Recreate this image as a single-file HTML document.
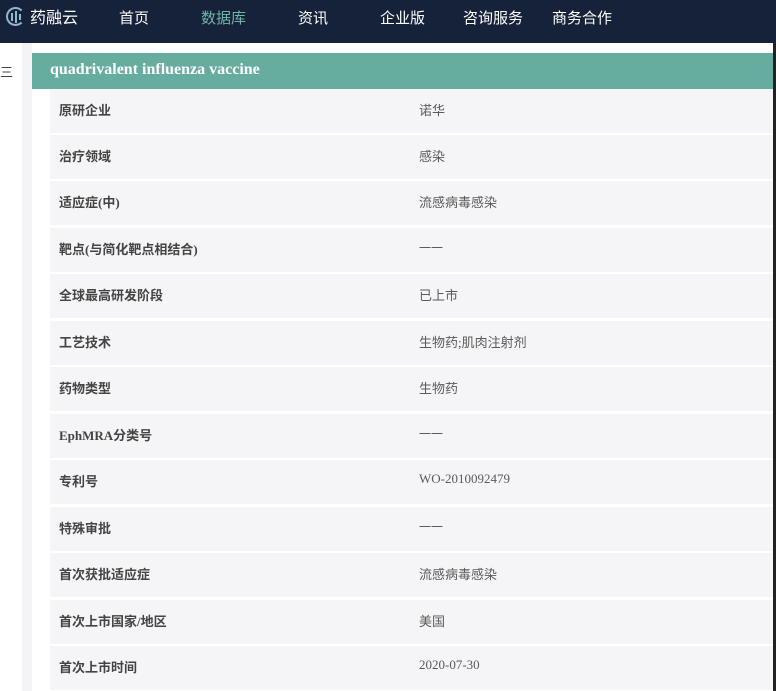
<!DOCTYPE html>
<html><head><meta charset="utf-8"><style>
*{margin:0;padding:0;box-sizing:border-box}
body{width:776px;height:691px;overflow:hidden;background:#fff;position:relative;font-family:"Liberation Serif","Noto Sans CJK SC",serif}
.nav{position:absolute;left:0;top:0;width:776px;height:43px;background:#16223a}
.nav span{position:absolute;top:10px;font-family:"Liberation Sans","Noto Sans CJK SC",sans-serif;font-size:15px;color:#fff;line-height:18px}
.logo{position:absolute;left:6px;top:7px;width:19px;height:19px;border:2px solid #8fb7d0;border-radius:50%;border-right-color:transparent}
.logo i{position:absolute;top:4px;width:2px;height:8px;background:#8fb7d0}
.strip{position:absolute;left:22px;top:43px;width:10px;height:648px;background:#f4f4f6}
.head{position:absolute;left:32px;top:53px;width:741px;height:36px;background:#66ad9f;color:#fff;font-weight:bold;font-size:16px;line-height:34px;padding-left:18px}
.row{position:absolute;left:50px;width:723px;height:44px;background:#f5f4f7;font-size:13px}
.row b{position:absolute;left:9px;top:11px;color:#444;font-family:"Liberation Serif","Noto Sans CJK SC",serif}
.row em{position:absolute;left:369px;top:11px;font-style:normal;color:#5a5a5a}
.d{font-family:"Noto Sans CJK SC",sans-serif;color:#666;font-size:12px}
.edge{position:absolute;left:773px;top:43px;width:3px;height:648px;background:#222}
.lt{position:absolute;left:0;top:62px;font-size:13px;color:#444;font-family:"Noto Sans CJK SC",sans-serif}
</style></head><body>
<div class="nav">
<div class="logo"><i style="left:3px"></i><i style="left:7px;top:2px;height:12px"></i><i style="left:11px;top:5px;height:6px"></i></div>
<span style="left:30px;font-size:16px">药融云</span>
<span style="left:119px">首页</span>
<span style="left:201px;color:#6fb5a8">数据库</span>
<span style="left:298px">资讯</span>
<span style="left:380px">企业版</span>
<span style="left:463px">咨询服务</span>
<span style="left:552px">商务合作</span>
</div>
<div class="lt">三</div>
<div class="strip"></div>
<div class="head">quadrivalent influenza vaccine</div>
<div class="row" style="top:89px"><b>原研企业</b><em>诺华</em></div>
<div class="row" style="top:135px"><b>治疗领域</b><em>感染</em></div>
<div class="row" style="top:181px"><b>适应症(中)</b><em>流感病毒感染</em></div>
<div class="row" style="top:228px"><b>靶点(与简化靶点相结合)</b><em class="d">一一</em></div>
<div class="row" style="top:274px"><b>全球最高研发阶段</b><em>已上市</em></div>
<div class="row" style="top:321px"><b>工艺技术</b><em>生物药;肌肉注射剂</em></div>
<div class="row" style="top:367px"><b>药物类型</b><em>生物药</em></div>
<div class="row" style="top:414px"><b>EphMRA分类号</b><em class="d">一一</em></div>
<div class="row" style="top:460px"><b>专利号</b><em>WO-2010092479</em></div>
<div class="row" style="top:507px"><b>特殊审批</b><em class="d">一一</em></div>
<div class="row" style="top:553px"><b>首次获批适应症</b><em>流感病毒感染</em></div>
<div class="row" style="top:600px"><b>首次上市国家/地区</b><em>美国</em></div>
<div class="row" style="top:646px"><b>首次上市时间</b><em>2020-07-30</em></div>
<div class="edge"></div>
</body></html>
